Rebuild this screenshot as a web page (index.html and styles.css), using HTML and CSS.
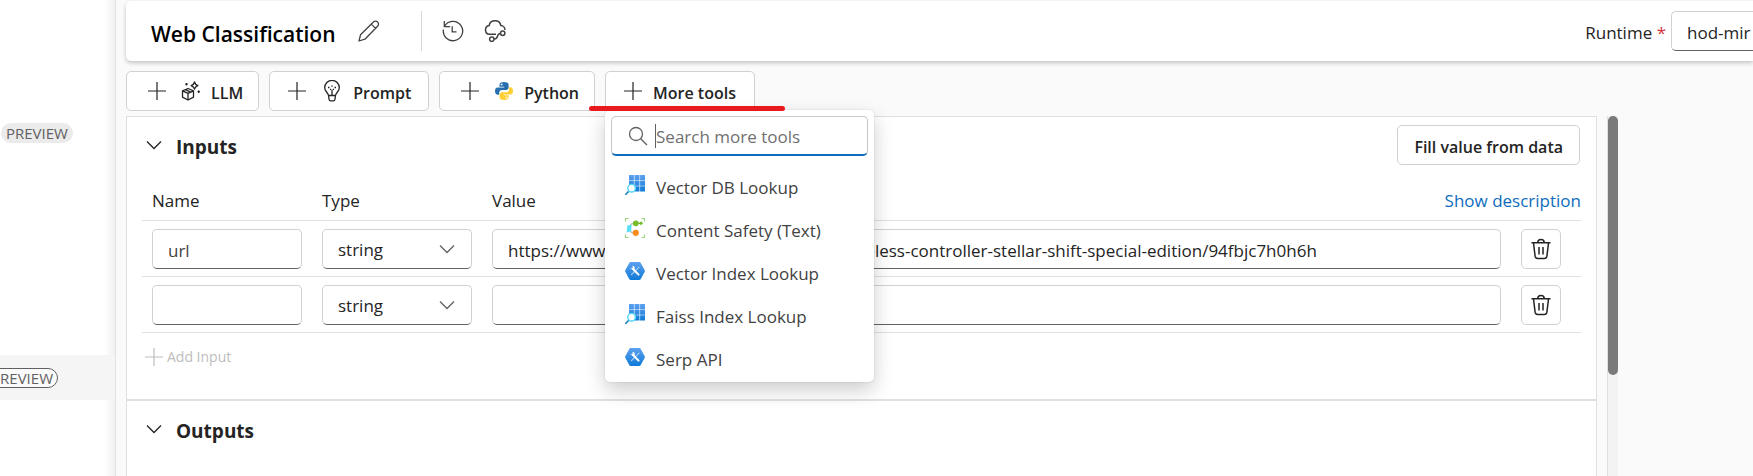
FILE: index.html
```html
<!DOCTYPE html>
<html lang="en">
<head>
<meta charset="utf-8">
<title>Web Classification</title>
<link rel="stylesheet" href="styles.css">
</head>
<body>
<svg class="defs" aria-hidden="true">
  <defs>
    <linearGradient id="blue" x1="0" y1="0" x2="0" y2="1"><stop offset="0" stop-color="#5ea0ef"/><stop offset="1" stop-color="#0f7bd8"/></linearGradient>
    <linearGradient id="pyb" x1="0" y1="0" x2="1" y2="1"><stop offset="0" stop-color="#2f7fc4"/><stop offset="1" stop-color="#1f6099"/></linearGradient>
    <symbol id="plus" viewBox="0 0 20 20"><path d="M10 1v18M1 10h18" fill="none" stroke="currentColor" stroke-width="1.2"/></symbol>
    <symbol id="chevron" viewBox="0 0 16 16"><path d="M1 4.5l7 7 7-7" fill="none" stroke="currentColor" stroke-width="1.3"/></symbol>
    <symbol id="trash" viewBox="0 0 22 22"><path d="M1.500 4.700h19M3.500 5l1.600 13.200a2.700 2.700 0 0 0 2.600 2.300h6.600a2.700 2.700 0 0 0 2.600-2.300L18.500 5M7.800 4.500a3.200 2.900 0 0 1 6.400 0M9 9v7.500M13 9v7.500" fill="none" stroke="currentColor" stroke-width="1.500"/></symbol>
    <symbol id="lookup" viewBox="0 0 20 20">
      <path d="M4 0h4.900v5.200H4zM9.500 0h5v5.200h-5zM15.100 0H20v5.200h-4.900zM4 5.800h4.900v4.900H4zM9.500 5.800h5v4.900h-5zM15.100 5.800H20v4.900h-4.900zM9.500 11.300h5V16.500h-5zM15.100 11.300H20V16.500h-4.900z" fill="url(#blue)"/>
      <path d="M.8 19.300l3.400-3.500" stroke="#2a8fc0" stroke-width="1.700" stroke-linecap="round"/>
      <circle cx="6.600" cy="13.200" r="3.800" fill="#fff" stroke="#50d5f5" stroke-width="1.400"/>
    </symbol>
    <symbol id="tool" viewBox="0 0 20 20">
      <path d="M5.600 1h8.800a1.400 1.400 0 0 1 1.200.7l4 7.300a2 2 0 0 1 0 2l-4 7.300a1.400 1.400 0 0 1-1.200.7H5.600a1.400 1.400 0 0 1-1.200-.7l-4-7.300a2 2 0 0 1 0-2l4-7.300A1.400 1.400 0 0 1 5.600 1z" fill="url(#blue)"/>
      <path d="M14 6.200L6.500 13.700" stroke="#a5cdf5" stroke-width="1.200" stroke-linecap="round"/>
      <path d="M8 8l5.600 5.600" stroke="#fff" stroke-width="2" stroke-linecap="round"/>
      <path d="M5.200 6.500a2.600 2.600 0 0 0 4.700.8 2.600 2.600 0 0 0-2.300-2.600v2.200l-1 .5z" fill="#fff"/>
    </symbol>
  </defs>
</svg>
<div class="app">
  <aside class="sidebar">
    <div class="nav-row"><span class="badge">PREVIEW</span></div>
    <div class="nav-row nav-row-active"><span class="badge badge-outline">PREVIEW</span></div>
  </aside>
  <main class="main">
    <header class="topbar">
      <h1 class="title">Web Classification</h1>
      <button class="icon-btn" aria-label="Rename">
        <svg width="22" height="22" viewBox="0 0 22 22" fill="none" stroke="currentColor" stroke-width="1.300" stroke-linejoin="round"><path d="M1 21l1.500-6.200L15.400 2a2.900 2.900 0 0 1 4.200 0 2.900 2.900 0 0 1 0 4.200L6.900 19.200zM13.300 4.100l4.300 4.300"/></svg>
      </button>
      <span class="divider"></span>
      <button class="icon-btn" aria-label="History">
        <svg width="22" height="22" viewBox="0 0 22 22" fill="none" stroke="currentColor" stroke-width="1.300"><path d="M2.500 6.300A9.700 9.700 0 1 1 1.400 9.500M2.300 1v5.600h5.900M10.200 6.300v5.600h4.300"/></svg>
      </button>
      <button class="icon-btn" aria-label="Deploy">
        <svg width="22" height="22" viewBox="0 0 22 22" fill="none" stroke="currentColor" stroke-width="1.500"><path d="M12 14.300H5.500a4.400 4.400 0 0 1-.4-8.700 6 6 0 0 1 11.800 0 4.300 4.300 0 0 1 4 4.400"/><circle cx="18.700" cy="13.300" r="2.200"/><circle cx="7.800" cy="19.200" r="2.200"/><path d="M10 19c5 .500 2-5.500 6.500-5.500"/></svg>
      </button>
      <div class="runtime">
        <label for="runtime">Runtime <span class="required">*</span></label>
        <select id="runtime" class="field runtime-select"><option>hod-mir</option></select>
      </div>
    </header>

    <div class="toolbar">
      <button class="btn btn-tool"><svg class="plus"><use href="#plus"/></svg>
        <svg class="kind" viewBox="0 0 20 20" fill="none" stroke="currentColor" stroke-width="1.300" stroke-linejoin="round"><path d="M7 7.500l5.500 2.300v6.400L7 19l-5.500-2.800V9.800zM1.500 9.800L7 12.300l5.500-2.500M7 12.300V19M4.200 8.600l5.500 2.500M13.500 1c.5 2.400 1 2.900 3.400 3.600-2.400.7-2.900 1.200-3.400 3.600-.5-2.400-1-2.900-3.400-3.600 2.400-.7 2.900-1.200 3.400-3.600z"/><path d="M5.500 2v2.400M4.300 3.200h2.400M17.700 9.500v2.400M16.500 10.700h2.400"/></svg>
        <span>LLM</span></button>
      <button class="btn btn-tool btn-prompt"><svg class="plus"><use href="#plus"/></svg>
        <svg class="kind kind-bulb" viewBox="0 0 20 22" fill="none" stroke="currentColor" stroke-width="1.300"><path d="M6.500 15.500C6 12.500 2.700 11.500 2.700 7.700a7.300 7.300 0 0 1 14.600 0c0 3.800-3.300 4.800-3.800 7.800zM6.500 15.500l.6 4a1.500 1.500 0 0 0 1.500 1.300h2.800a1.500 1.500 0 0 0 1.500-1.300l.6-4M10 9.500v6"/><path d="M6 7.500h1.500M12.500 7.500H14M8 9.300h1M11 9.300h1M10 5.500v1.300"/></svg>
        <span>Prompt</span></button>
      <button class="btn btn-tool"><svg class="plus"><use href="#plus"/></svg>
        <svg class="kind" viewBox="0 0 20 20"><path d="M9.900 1C6.600 1 5.500 2.200 5.500 3.700v2h4.700v.8H3.600C1.800 6.500 1 8 1 10.100s.9 3.600 2.500 3.600h1.700v-2c0-1.600 1.200-2.800 2.800-2.800h4.300c1.300 0 2.300-1 2.300-2.300V3.700C14.600 2 13 1 9.900 1z" fill="url(#pyb)"/><circle cx="7.600" cy="3.400" r=".9" fill="#fff"/><path d="M10.100 19c3.300 0 4.400-1.200 4.400-2.700v-2H9.800v-.8h6.600c1.800 0 2.600-1.500 2.600-3.600s-.9-3.600-2.500-3.600h-1.400v2.200c0 1.600-1.200 2.800-2.800 2.800H7.900c-1.300 0-2.300 1-2.300 2.300v2.700C5.600 18 7 19 10.100 19z" fill="#ffd033"/><circle cx="12.400" cy="16.600" r=".9" fill="#fff"/></svg>
        <span>Python</span></button>
      <div class="more">
        <button class="btn btn-more" aria-expanded="true"><svg class="plus"><use href="#plus"/></svg><span>More tools</span></button>
        <div class="popup">
          <div class="search">
            <svg class="search-icon" viewBox="0 0 20 20" fill="none" stroke="currentColor" stroke-width="1.300"><circle cx="8" cy="8" r="6.500"/><path d="M12.700 12.700L19 19"/></svg>
            <span class="caret"></span>
            <input class="search-input" type="text" placeholder="Search more tools" aria-label="Search more tools">
          </div>
          <ul class="tools">
            <li><button class="tool"><svg class="tool-icon"><use href="#lookup"/></svg><span>Vector DB Lookup</span></button></li>
            <li><button class="tool"><svg class="tool-icon" viewBox="0 0 20 20" fill="none"><path d="M.5 3.500v-3h3M16.500.5h3v3M19.500 16.500v3h-3M3.500 19.500h-3v-3" stroke="#9bd37a" stroke-width="1.200"/><path d="M10 5.300C6.500 5.300 5 7 4.500 9M4.500 12c.5 2 2.500 3 5.500 3" stroke="#c4c4c4" stroke-width="1.600"/><path d="M2.300 7.500l4.300-.8-.4 6.600-4.600 1.200z" fill="#5ae0f8"/><circle cx="10.800" cy="5.300" r="2.900" fill="#76bc2d"/><path d="M13 5.300h3.500M15.500 3.800l1.500 1.500-1.500 1.500" stroke="#76bc2d" stroke-width="1.600"/><circle cx="10.800" cy="14.800" r="3.100" fill="#f78d1e"/></svg><span>Content Safety (Text)</span></button></li>
            <li><button class="tool"><svg class="tool-icon"><use href="#tool"/></svg><span>Vector Index Lookup</span></button></li>
            <li><button class="tool"><svg class="tool-icon"><use href="#lookup"/></svg><span>Faiss Index Lookup</span></button></li>
            <li><button class="tool"><svg class="tool-icon"><use href="#tool"/></svg><span>Serp API</span></button></li>
          </ul>
        </div>
        <span class="underline"></span>
      </div>
    </div>

    <div class="workspace">
      <div class="flow">
        <section class="panel panel-inputs">
          <div class="panel-head">
            <svg class="chevron"><use href="#chevron"/></svg>
            <h2>Inputs</h2>
            <button class="btn btn-fill"><span>Fill value from data</span></button>
          </div>
          <table class="grid">
            <colgroup><col class="col-name"><col class="col-type"><col><col class="col-action"></colgroup>
            <thead><tr><th>Name</th><th>Type</th><th colspan="2"><div class="value-head">Value <a href="#">Show description</a></div></th></tr></thead>
            <tbody>
              <tr>
                <td><input class="field name-field" type="text" value="url" aria-label="Name"></td>
                <td><div class="select"><select class="field" aria-label="Type"><option>string</option></select><svg class="chevron"><use href="#chevron"/></svg></div></td>
                <td><input class="field" type="text" aria-label="Value" value="https://www.microsoft.com/en-us/d/xbox-wireless-controller-stellar-shift-special-edition/94fbjc7h0h6h"></td>
                <td><button class="btn btn-trash" aria-label="Delete url"><svg><use href="#trash"/></svg></button></td>
              </tr>
              <tr>
                <td><input class="field name-field" type="text" aria-label="Name"></td>
                <td><div class="select"><select class="field" aria-label="Type"><option>string</option></select><svg class="chevron"><use href="#chevron"/></svg></div></td>
                <td><input class="field" type="text" aria-label="Value"></td>
                <td><button class="btn btn-trash" aria-label="Delete input"><svg><use href="#trash"/></svg></button></td>
              </tr>
            </tbody>
          </table>
          <button class="add" disabled><svg class="plus"><use href="#plus"/></svg>Add Input</button>
        </section>
        <section class="panel panel-outputs">
          <div class="panel-head">
            <svg class="chevron"><use href="#chevron"/></svg>
            <h2>Outputs</h2>
          </div>
        </section>
      </div>
      <div class="scrollbar"><div class="thumb"></div></div>
    </div>
  </main>
</div>
</body>
</html>
```

FILE: styles.css
```css
* { box-sizing: border-box; }
body {
  margin: 0;
  background: #fafafa;
  color: #242424;
  font: 17px/24px "Segoe UI", "Open Sans", "Noto Sans", sans-serif;
  overflow: hidden;
}
button, input, select { font: inherit; color: inherit; }
h1, h2, ul { margin: 0; padding: 0; }
svg { display: block; flex: none; }
.defs { position: absolute; width: 0; height: 0; }

.app { display: flex; height: 100vh; }

.sidebar {
  flex: none;
  width: 116px;
  padding-top: 110px;
  background: linear-gradient(to left, #f0f0f0, #fff 10px);
  border-right: 1px solid #e3e3e3;
  overflow: hidden;
}
.nav-row { display: flex; align-items: center; height: 45px; padding-left: 1px; }
.nav-row-active { justify-content: flex-end; margin-top: 200px; padding-right: 57px; background: #f5f5f5; }
.badge {
  flex: none;
  padding: 0 5px;
  border-radius: 10px;
  background: #ebebeb;
  color: #616161;
  font-size: 15px;
  line-height: 20px;
}
.badge-outline { background: #fafafa; border: 1px solid #616161; line-height: 18px; padding: 0 4px; }

.main { flex: 1; min-width: 0; display: flex; flex-direction: column; padding-left: 10px; }

.topbar {
  flex: none;
  display: flex;
  align-items: center;
  height: 60px;
  margin-top: 1px;
  padding-left: 25px;
  background: #fff;
  border-radius: 5px 0 0 5px;
  box-shadow: 0 2px 4px rgba(0, 0, 0, .22);
}
.title { padding-top: 5px; margin-right: 2px; font-size: 21px; font-weight: 600; line-height: 28px; color: #000; }
.icon-btn { display: flex; padding: 0; border: 0; background: none; color: #424242; margin-left: 20px; }
.divider { width: 1px; height: 40px; margin-left: 41px; background: #d6d6d6; }
.runtime { display: flex; align-items: center; gap: 5px; margin-left: auto; }
.runtime label { padding-top: 3px; }
.required { color: #d13438; }

.field {
  display: block;
  width: 100%;
  height: 40px;
  padding: 3px 15px 0;
  border: 1px solid #d1d1d1;
  border-bottom-color: #616161;
  border-radius: 5px;
  background: #fff;
  appearance: none;
  outline: 0;
}
.runtime-select { width: 82px; border-right: 0; border-radius: 5px 0 0 5px; padding-right: 0; }
.name-field { color: #424242; }

.toolbar { flex: none; display: flex; gap: 10px; margin-top: 10px; }
.btn {
  display: flex;
  align-items: center;
  height: 40px;
  border: 1px solid #d1d1d1;
  border-radius: 5px;
  background: #fff;
  font-size: 16px;
  font-weight: 600;
}
.btn span { padding-top: 3px; }
.plus { width: 20px; height: 20px; }
.btn-tool { padding: 0 15px 0 20px; gap: 14px; }
.btn-prompt { padding: 0 17px; gap: 15px; }
.btn-tool .kind { width: 20px; height: 20px; }
.btn-tool .kind-bulb { height: 22px; }
.btn-tool span { margin-left: -4px; }
.btn-more { padding: 0 18px 0 17px; gap: 10px; }
.more { position: relative; }

.popup {
  position: absolute;
  z-index: 2;
  top: 39px;
  left: 0;
  width: 269px;
  padding: 6px 6px 1px;
  border-radius: 5px;
  background: #fff;
  box-shadow: 0 0 2px rgba(0, 0, 0, .14), 0 8px 20px rgba(0, 0, 0, .2);
}
.search {
  display: flex;
  align-items: center;
  height: 40px;
  padding: 0 10px 0 16px;
  border: 1px solid #c7c7c7;
  border-bottom: 2px solid #0f6cbd;
  border-radius: 5px;
}
.search-icon { width: 20px; height: 20px; color: #616161; }
.caret { width: 1px; height: 24px; margin-left: 7px; background: #616161; }
.search-input { flex: 1; min-width: 0; padding: 3px 0 0; border: 0; outline: 0; background: none; }
.search-input::placeholder { color: #707070; opacity: 1; }
.tools { list-style: none; padding-top: 10px; }
.tool {
  display: flex;
  align-items: center;
  gap: 11px;
  width: 100%;
  height: 43px;
  padding: 0 14px;
  border: 0;
  background: none;
  color: #424242;
}
.tool-icon { width: 20px; height: 20px; margin-bottom: 6px; }
.underline {
  position: absolute;
  z-index: 3;
  top: 35px;
  left: -16px;
  width: 196px;
  height: 5px;
  border-radius: 3px;
  background: #e81a1e;
}

.workspace { flex: 1; min-height: 0; display: flex; gap: 10px; margin-top: 5px; padding-right: 135px; }
.flow { flex: 1; min-width: 0; display: flex; flex-direction: column; }
.panel { padding: 8px 15px; background: #fff; border: 1px solid #e0e0e0; }
.panel-inputs { padding-bottom: 21px; }
.panel-outputs { flex: 1; border-bottom: 0; }
.panel-head { display: flex; align-items: center; height: 40px; padding-left: 4px; }
.panel-head h2 { padding-top: 3px; margin-left: 14px; font-size: 19px; font-weight: 700; }
.chevron { width: 16px; height: 16px; }
.btn-fill { margin-left: auto; margin-right: 1px; padding: 0 16px; }

.grid { width: 100%; table-layout: fixed; border-collapse: separate; border-spacing: 0; }
.col-name, .col-type { width: 170px; }
.col-action { width: 70px; }
.grid th { height: 56px; padding: 17px 0 0 10px; border-bottom: 1px solid #e0e0e0; text-align: left; font-weight: 400; }
.grid td { height: 56px; padding: 0 10px; border-bottom: 1px solid #e0e0e0; }
.value-head { display: flex; justify-content: space-between; }
.value-head a { color: #0f6cbd; text-decoration: none; }
.select { position: relative; }
.select .chevron { position: absolute; top: 12px; right: 17px; color: #616161; pointer-events: none; }
.btn-trash { width: 40px; padding: 0; justify-content: center; }
.btn-trash svg { width: 22px; height: 22px; }
.add {
  display: flex;
  align-items: center;
  gap: 3px;
  height: 45px;
  padding: 2px 2px 0;
  border: 0;
  background: none;
  color: #bdbdbd;
  font-size: 14px;
}

.scrollbar { flex: none; width: 11px; border-left: 1px solid #e0e0e0; background: #f3f3f3; }
.thumb { height: 72%; border-radius: 5px; background: #7a7a7a; }
```
